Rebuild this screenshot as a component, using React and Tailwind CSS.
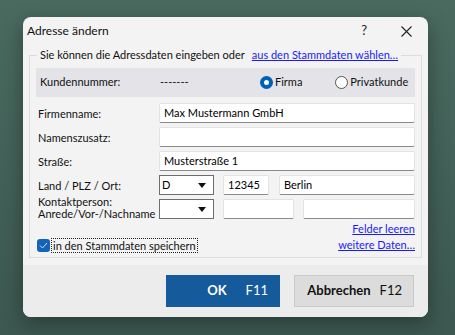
import React from "react";

const font = { fontFamily: "Lato, 'Noto Sans', sans-serif" };

function Input({ value = "", className = "" }) {
  return (
    <div
      className={`h-[20px] bg-white border border-[#e3e3e3] border-b-[#8a8a8a] rounded-[2px] flex items-center pl-[4px] text-[11px] text-black whitespace-nowrap ${className}`}
    >
      {value}
    </div>
  );
}

function Select({ value = "" }) {
  return (
    <div className="w-[55px] h-[20px] bg-white border border-[#6e6e6e] flex items-center justify-between pl-[2px] pr-[7px] text-[11px] text-black">
      <span>{value}</span>
      <svg width="8" height="5" viewBox="0 0 8 5">
        <path d="M0 0 H8 L4 5 Z" fill="#111" />
      </svg>
    </div>
  );
}

function Row({ label, children }) {
  return (
    <div className="flex items-center h-[20px]">
      <div className="w-[121px] text-[11px] text-[#111] leading-[13px] whitespace-nowrap">{label}</div>
      <div className="flex-1 flex items-center">{children}</div>
    </div>
  );
}

export default function App() {
  return (
    <div
      className="w-[455px] h-[335px] bg-gradient-to-b from-[#4a6a60] to-[#3c5850] pt-[17px] pl-[23px]"
      style={font}
    >
      <div className="w-[405px] h-[300px] rounded-[8px] bg-[#f3f3f3] shadow-[0_6px_20px_rgba(0,0,0,0.35)] flex flex-col overflow-hidden">
        {/* title bar */}
        <div className="h-[27px] flex items-center pl-[4px] pr-[16px] pt-[1px]">
          <div className="flex-1 text-[12px] text-[#111]">Adresse ändern</div>
          <div className="text-[13px] text-[#222] mr-[34px]">?</div>
          <svg width="11" height="11" viewBox="0 0 11 11">
            <path d="M0.5 0.5 L10.5 10.5 M10.5 0.5 L0.5 10.5" stroke="#222" strokeWidth="1.1" />
          </svg>
        </div>

        {/* body */}
        <div className="flex-1 px-[6px] pt-[11px]">
          <div className="relative border border-[#dcdcdc] h-[203px] px-[6px] pt-[12px]">
            <div className="absolute -top-[9px] left-[7px] bg-[#f3f3f3] px-[3px] flex items-center text-[11px] leading-[16px] whitespace-nowrap">
              <span className="text-[#111]">Sie können die Adressdaten eingeben oder</span>
              <span className="ml-[7px] text-[#1a1aff] underline">aus den Stammdaten wählen…</span>
            </div>

            {/* Kundennummer band */}
            <div className="h-[29px] bg-[#e3e3e8] flex items-center pl-[4px] text-[11px] text-[#111] whitespace-nowrap">
              <span className="w-[120px]">Kundennummer:</span>
              <span className="w-[100px]">-------</span>
              <span className="flex items-center">
                <span className="w-[13px] h-[13px] rounded-full bg-[#0060b8] flex items-center justify-center">
                  <span className="w-[5px] h-[5px] rounded-full bg-white" />
                </span>
                <span className="ml-[2px]">Firma</span>
              </span>
              <span className="flex items-center ml-[33px]">
                <span className="w-[13px] h-[13px] rounded-full bg-white border border-[#555]" />
                <span className="ml-[2px]">Privatkunde</span>
              </span>
            </div>

            <div className="flex flex-col gap-[4px] mt-[6px] pl-[2px]">
              <Row label="Firmenname:">
                <Input value="Max Mustermann GmbH" className="flex-1" />
              </Row>
              <Row label="Namenszusatz:">
                <Input className="flex-1" />
              </Row>
              <Row label="Straße:">
                <Input value="Musterstraße 1" className="flex-1" />
              </Row>
              <Row label="Land / PLZ / Ort:">
                <Select value="D" />
                <Input value="12345" className="w-[46px] ml-[9px]" />
                <Input value="Berlin" className="flex-1 ml-[10px]" />
              </Row>
              <div className="flex items-center h-[20px]">
                <div className="w-[121px] text-[11px] text-[#111] leading-[12px] -mt-[2px] whitespace-nowrap">
                  Kontaktperson:
                  <br />
                  Anrede/Vor-/Nachname
                </div>
                <div className="flex-1 flex items-center">
                  <Select />
                  <Input className="w-[71px] ml-[9px]" />
                  <Input className="flex-1 ml-[9px]" />
                </div>
              </div>
            </div>

            <div className="flex justify-between items-end mt-[2px]">
              <div className="flex items-center pl-[1px]">
                <span className="w-[13px] h-[13px] rounded-[3px] bg-[#1563b8] flex items-center justify-center">
                  <svg width="9" height="7" viewBox="0 0 9 7">
                    <path d="M1 3.5 L3.5 6 L8 1" fill="none" stroke="#cfe0f5" strokeWidth="1" />
                  </svg>
                </span>
                <span className="ml-[1px] border border-dotted border-[#222] px-[1px] text-[11px] leading-[13px] text-[#111] whitespace-nowrap">
                  in den Stammdaten speichern
                </span>
              </div>
              <div className="flex flex-col items-end text-[11px] leading-[16px] text-[#1a1aff] underline whitespace-nowrap">
                <span>Felder leeren</span>
                <span>weitere Daten…</span>
              </div>
            </div>
          </div>
        </div>

        {/* footer */}
        <div className="h-[52px] bg-[#ececec] flex items-start justify-end pt-[10px] pr-[14px] gap-[14px]">
          <div className="w-[114px] h-[32px] bg-[#155a9a] flex items-center justify-end pr-[12px] text-[13px] text-white font-bold">
            <span>OK</span>
            <span className="ml-[19px] font-normal">F11</span>
          </div>
          <div className="w-[120px] h-[32px] bg-[#dcdcdc] border border-[#cacaca] flex items-center justify-end pr-[11px] text-[13px] text-[#111]">
            <span className="font-bold">Abbrechen</span>
            <span className="ml-[9px]">F12</span>
          </div>
        </div>
      </div>
    </div>
  );
}
